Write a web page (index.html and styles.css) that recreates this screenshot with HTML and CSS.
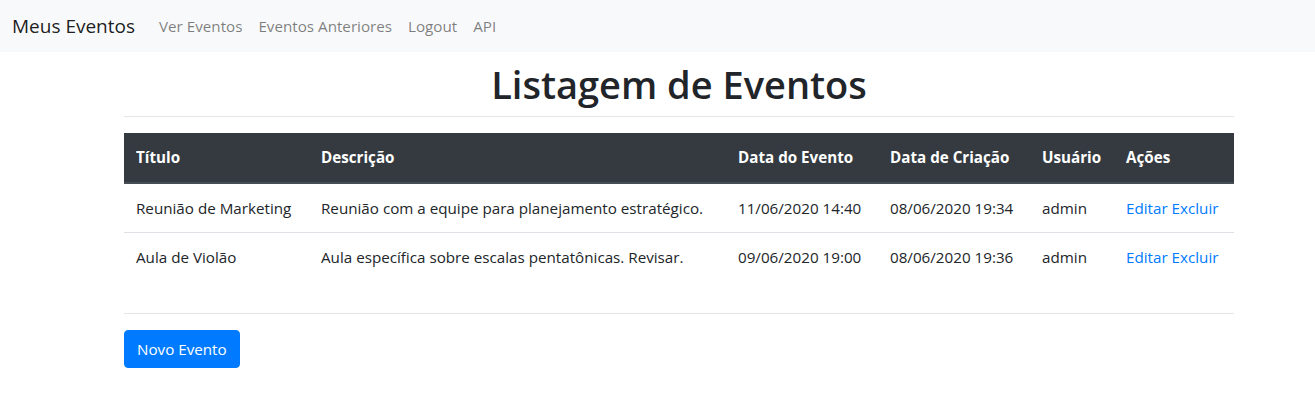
FILE: index.html
```html
<!DOCTYPE html>
<html lang="pt-BR">
<head>
<meta charset="utf-8">
<title>Meus Eventos</title>
<link rel="stylesheet" href="styles.css">
</head>
<body>
<nav class="navbar">
  <a class="brand" href="#">Meus Eventos</a>
  <ul class="nav-links">
    <li><a href="#">Ver Eventos</a></li>
    <li><a href="#">Eventos Anteriores</a></li>
    <li><a href="#">Logout</a></li>
    <li><a href="#">API</a></li>
  </ul>
</nav>
<main class="container">
  <h1 class="title">Listagem de Eventos</h1>
  <hr class="divider">
  <table class="table">
    <thead>
      <tr>
        <th class="c-titulo">Título</th>
        <th class="c-desc">Descrição</th>
        <th class="c-data">Data do Evento</th>
        <th class="c-data">Data de Criação</th>
        <th class="c-user">Usuário</th>
        <th class="c-acoes">Ações</th>
      </tr>
    </thead>
    <tbody>
      <tr>
        <td>Reunião de Marketing</td>
        <td>Reunião com a equipe para planejamento estratégico.</td>
        <td>11/06/2020 14:40</td>
        <td>08/06/2020 19:34</td>
        <td>admin</td>
        <td><a href="#">Editar</a> <a href="#">Excluir</a></td>
      </tr>
      <tr>
        <td>Aula de Violão</td>
        <td>Aula específica sobre escalas pentatônicas. Revisar.</td>
        <td>09/06/2020 19:00</td>
        <td>08/06/2020 19:36</td>
        <td>admin</td>
        <td><a href="#">Editar</a> <a href="#">Excluir</a></td>
      </tr>
    </tbody>
  </table>
  <hr class="divider">
  <a class="btn" href="#">Novo Evento</a>
</main>
</body>
</html>
```

FILE: styles.css
```css
* { box-sizing: border-box; }
body {
  margin: 0;
  font-family: "Open Sans", "Noto Sans", sans-serif;
  font-size: 15.2px;
  line-height: 24px;
  color: #212529;
  background: #fff;
}
a { text-decoration: none; }
.navbar {
  background: #f8f9fa;
  height: 52px;
  display: flex;
  align-items: center;
  padding: 0 12px;
}
.brand {
  font-size: 19px;
  color: rgba(0,0,0,.9);
  margin-right: 16px;
}
.nav-links {
  list-style: none;
  margin: 0;
  padding: 0;
  display: flex;
}
.nav-links a {
  display: block;
  padding: 8px;
  color: rgba(0,0,0,.5);
}
.container {
  width: 1110px;
  margin-left: 124px;
}
.title {
  margin: 8px 0 8px;
  font-size: 38px;
  font-weight: 600;
  line-height: 48px;
  text-align: center;
}
.divider {
  margin: 16px 0;
  border: 0;
  border-top: 1px solid rgba(0,0,0,.1);
}
.title + .divider { margin-top: 8px; }
.table {
  width: 100%;
  border-collapse: separate;
  border-spacing: 0;
  margin-bottom: 32px;
  table-layout: fixed;
}
.table th, .table td {
  padding: 12px;
  text-align: left;
  vertical-align: top;
  white-space: nowrap;
}
.table thead th {
  background: #343a40;
  color: #fff;
  font-weight: 700;
  padding-bottom: 13px;
  border-bottom: 2px solid #454d55;
}
.table tbody td { border-top: 1px solid #dee2e6; }
.table tbody tr:first-child td { border-top: 0; }
.table a { color: #007bff; }
.c-titulo { width: 185px; }
.c-desc { width: 417px; }
.c-data { width: 152px; }
.c-user { width: 84px; }
.c-acoes { width: 120px; }
.btn {
  display: inline-block;
  background: #007bff;
  color: #fff;
  border-radius: 4px;
  padding: 6px 12px;
  line-height: 24px;
  border: 1px solid #007bff;
}
```
